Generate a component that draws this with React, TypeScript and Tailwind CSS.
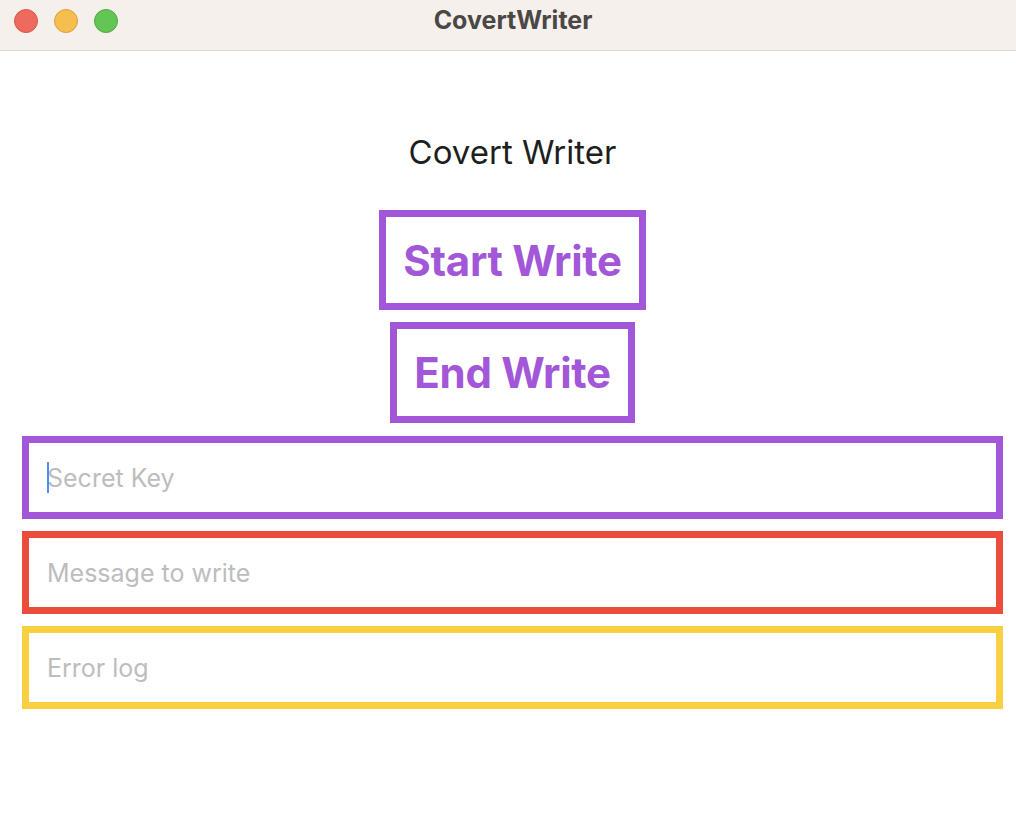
import React from "react";

const fields = [
  { placeholder: "Secret Key", border: "border-[#a256d8]", caret: true },
  { placeholder: "Message to write", border: "border-[#eb4c3c]", caret: false },
  { placeholder: "Error log", border: "border-[#f9d042]", caret: false },
];

const App = () => {
  return (
    <div className="w-[1016px] h-[834px] bg-white font-['Inter','Liberation_Sans',sans-serif] overflow-hidden">
      {/* title bar */}
      <div className="relative h-[51px] bg-[#f5f0ec] border-b border-[#d9d6d3] flex items-center justify-center">
        <div className="absolute left-[14px] top-[9px] flex gap-[16px]">
          <span className="w-[24px] h-[24px] rounded-full bg-[#ee6a5f] border border-[#d6574c]" />
          <span className="w-[24px] h-[24px] rounded-full bg-[#f5be4f] border border-[#d9a13a]" />
          <span className="w-[24px] h-[24px] rounded-full bg-[#62c554] border border-[#50a844]" />
        </div>
        <span className="ml-[10px] text-[25px] font-bold text-[#4a4745] -mt-[8px]">CovertWriter</span>
      </div>

      <div className="ml-[22px] w-[981px]">
        {/* heading + buttons */}
        <div className="flex flex-col items-center">
          <h1 className="mt-[82px] text-[33px] leading-[39px] text-[#1e1e1e]">Covert Writer</h1>
          <button className="mt-[38px] h-[100px] px-[17px] border-[7px] border-[#a256d8] text-[42px] tracking-[-0.3px] font-bold text-[#a256d8]">
            Start Write
          </button>
          <button className="mt-[12px] h-[101px] px-[17px] border-[7px] border-[#a256d8] text-[42px] tracking-[-0.3px] font-bold text-[#a256d8]">
            End Write
          </button>
        </div>

        {/* fields */}
        <div className="mt-[13px] flex flex-col gap-[12px]">
          {fields.map((f, i) => (
            <div key={i} className="relative">
              <input
                readOnly
                placeholder={f.placeholder}
                className={`w-full h-[83px] border-[7px] ${f.border} pl-[18px] text-[25px] text-[#333] placeholder:text-[#bdbdbd] outline-none`}
              />
              {f.caret && (
                <span className="absolute left-[25px] top-[26px] w-[2px] h-[31px] bg-[#4c8df6]" />
              )}
            </div>
          ))}
        </div>
      </div>
    </div>
  );
};

export default App;
